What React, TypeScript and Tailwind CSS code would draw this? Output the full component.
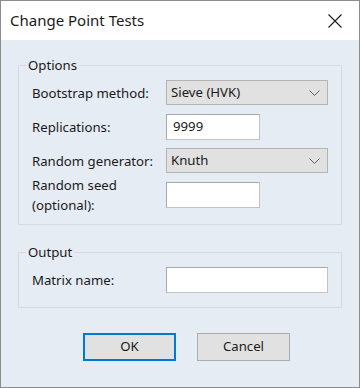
const ui = { fontFamily: '"Noto Sans", "Open Sans", sans-serif' };

function Chevron() {
  return (
    <svg width="11" height="6" viewBox="0 0 11 6" className="text-[#606060]">
      <path d="M0.5 0.5 L5.5 5.5 L10.5 0.5" fill="none" stroke="currentColor" strokeWidth="1" />
    </svg>
  );
}

function Select({ value }: { value: string }) {
  return (
    <div className="w-[162px] h-[25px] bg-[#e1e1e1] border border-[#b4b4b4] flex items-center justify-between pl-[4px] pr-[7px] text-[#1a1a1a]">
      <span>{value}</span>
      <Chevron />
    </div>
  );
}

function Field({ value = "", wide = false }: { value?: string; wide?: boolean }) {
  return (
    <div
      className={`${wide ? "w-[162px]" : "w-[94px]"} h-[26px] bg-white border border-[#c3c3c3] border-t-[#a8a8a8] border-l-[#a8a8a8] flex items-center pl-[6px] text-[#1a1a1a]`}
    >
      {value}
    </div>
  );
}

function Row({ label, children }: { label: React.ReactNode; children: React.ReactNode }) {
  return (
    <div className="flex items-center h-[25px]">
      <div className="w-[134px] leading-[20px] text-[#1a1a1a]">{label}</div>
      {children}
    </div>
  );
}

export default function App() {
  return (
    <div className="w-[360px] h-[388px] border border-[#8c8c8c] bg-[#e6ecf3] flex flex-col text-[13.2px]" style={ui}>
      {/* Title bar */}
      <div className="h-[39px] bg-white flex items-center justify-between pl-[9px] pr-[17px]">
        <span className="text-[15px] text-[#1a1a1a]">Change Point Tests</span>
        <svg width="14" height="14" viewBox="0 0 14 14">
          <path d="M0.5 0.5 L13.5 13.5 M13.5 0.5 L0.5 13.5" stroke="#1a1a1a" strokeWidth="1.1" />
        </svg>
      </div>

      <div className="px-[17px] pt-[17px]">
        {/* Options */}
        <fieldset className="border border-[#d4dae2] rounded-[1px] pb-[17px]">
          <legend className="ml-[7px] px-[2px] leading-[16px] text-[#1a1a1a]">Options</legend>
          <div className="flex flex-col gap-[9px] mt-[7px] pl-[13px]">
            <Row label="Bootstrap method:">
              <Select value="Sieve (HVK)" />
            </Row>
            <Row label="Replications:">
              <Field value="9999" />
            </Row>
            <Row label="Random generator:">
              <Select value="Knuth" />
            </Row>
            <Row
              label={
                <>
                  Random seed
                  <br />
                  (optional):
                </>
              }
            >
              <Field />
            </Row>
          </div>
        </fieldset>

        {/* Output */}
        <fieldset className="border border-[#d4dae2] rounded-[1px] pb-[15px] mt-[19px]">
          <legend className="ml-[7px] px-[2px] leading-[16px] text-[#1a1a1a]">Output</legend>
          <div className="mt-[7px] pl-[13px]">
            <Row label="Matrix name:">
              <Field wide />
            </Row>
          </div>
        </fieldset>

        {/* Buttons */}
        <div className="flex gap-[21px] pl-[65px] mt-[25px]">
          <button className="w-[93px] h-[28px] bg-[#e1e1e1] border-2 border-[#0078d7] text-[#1a1a1a]">OK</button>
          <button className="w-[93px] h-[28px] bg-[#e1e1e1] border border-[#adadad] text-[#1a1a1a]">Cancel</button>
        </div>
      </div>
    </div>
  );
}
